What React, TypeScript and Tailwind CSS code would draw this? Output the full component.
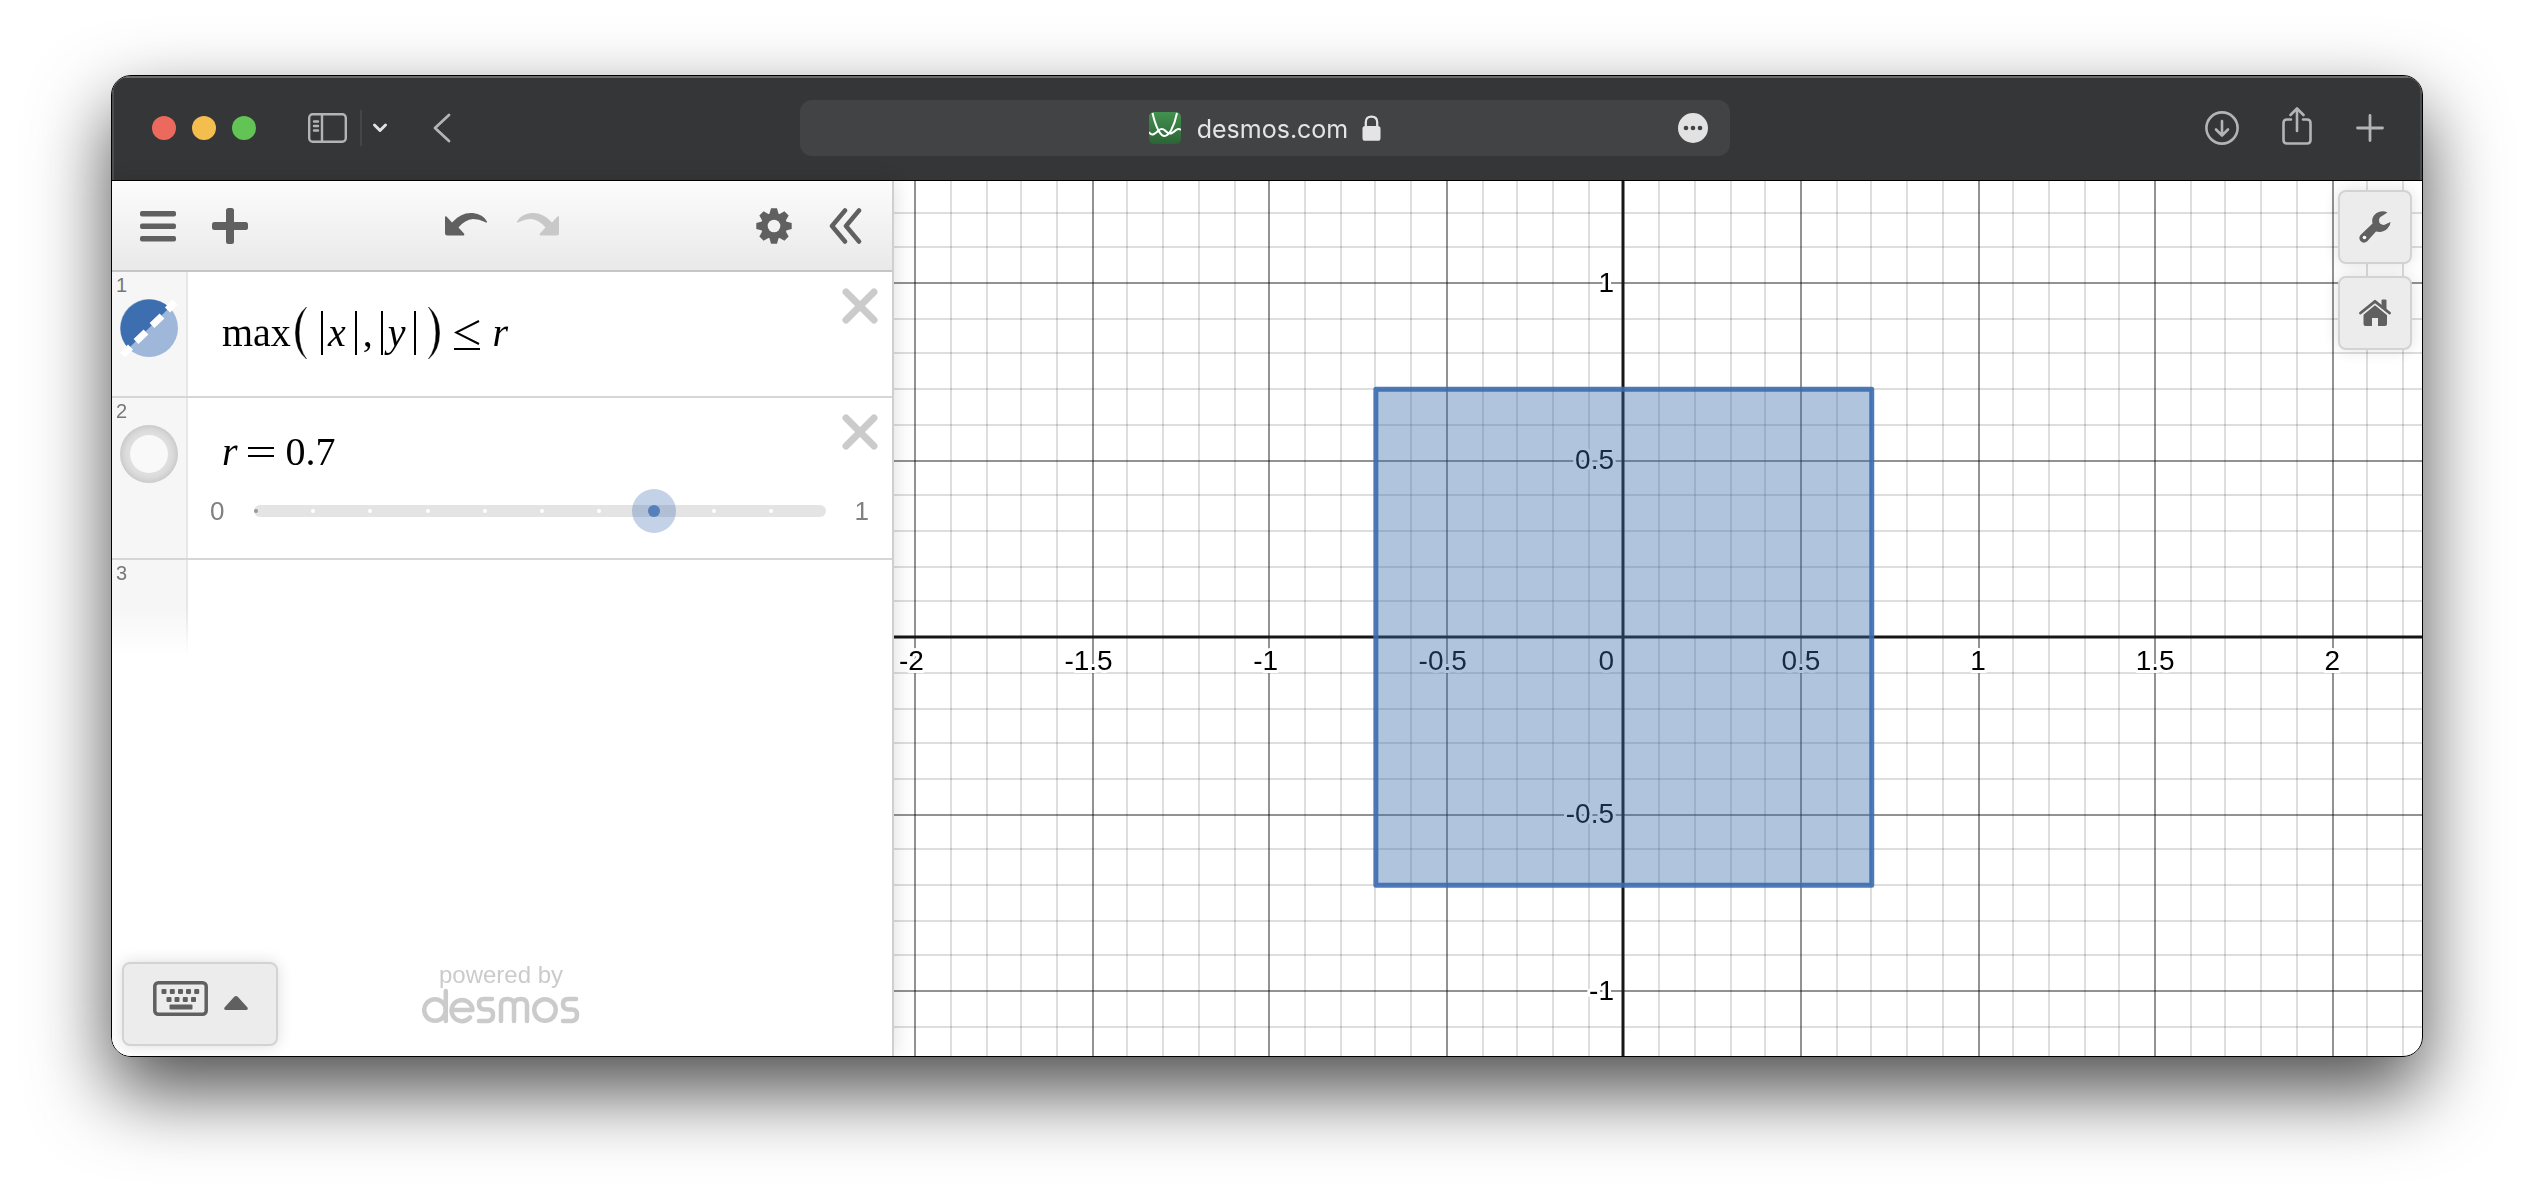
import React from 'react';

const GRID = 35.42;
const ORIGIN_X = 729.8;
const ORIGIN_Y = 456.2;
const snap = (v: number) => Math.floor(v / 2) * 2 + 1;
const gx = (k: number) => snap(ORIGIN_X + k * GRID);
const gy = (k: number) => snap(ORIGIN_Y + 1 - k * GRID) - 1;
const range = (a: number, b: number) => Array.from({ length: b - a + 1 }, (_, i) => a + i);

const X_LABELS = ['-2', '-1.5', '-1', '-0.5', '0.5', '1', '1.5', '2'];
const Y_LABELS = ['1', '0.5', '-0.5', '-1'];

function Graph() {
  const half = 7 * GRID;
  const edgeX = ORIGIN_X - half;
  const edgeY = ORIGIN_Y - half;
  return (
    <svg className="absolute inset-0 h-full w-full" role="img" aria-label="Graph of max(|x|,|y|) ≤ 0.7">
      {range(-20, 60).map((k) => (
        <line key={'x' + k} x1={gx(k)} x2={gx(k)} y1="0" y2="100%" stroke={k % 5 === 0 ? '#929292' : '#dedede'} strokeWidth="2" style={{ mixBlendMode: 'multiply' }} />
      ))}
      {range(-60, 12).map((k) => (
        <line key={'y' + k} y1={gy(k)} y2={gy(k)} x1="0" x2="100%" stroke={k % 5 === 0 ? '#929292' : '#dedede'} strokeWidth="2" style={{ mixBlendMode: 'multiply' }} />
      ))}
      <line x1="729" x2="729" y1="0" y2="100%" stroke="#161616" strokeWidth="3" />
      <line x1="0" x2="100%" y1="456" y2="456" stroke="#161616" strokeWidth="3" />
      <g fontFamily='"Liberation Sans", Arial, sans-serif' fontSize="28" fill="#000" stroke="#fff" strokeWidth="6" strokeLinejoin="round" paintOrder="stroke">
        {X_LABELS.map((t) => {
          const x = ORIGIN_X + Number(t) * 10 * GRID;
          return (
            <text key={t} x={t.startsWith('-') ? x - 4 : x} y="489" textAnchor="middle">{t}</text>
          );
        })}
        {Y_LABELS.map((t) => (
          <text key={t} x="720" y={ORIGIN_Y - Number(t) * 10 * GRID + 9} textAnchor="end">{t}</text>
        ))}
        <text x="720" y="489" textAnchor="end">0</text>
      </g>
      <rect x={edgeX} y={edgeY} width={half * 2} height={half * 2} fill="#396bac" fillOpacity="0.4" />
      <rect x={edgeX} y={edgeY} width={half * 2} height={half * 2} fill="none" stroke="#3b6db0" strokeOpacity="0.9" strokeWidth="5" strokeLinejoin="round" />
    </svg>
  );
}

function Undo({ flip, className }: { flip?: boolean; className: string }) {
  return (
    <svg className={className} width="42" height="24" viewBox="0 0 42 24" fill="currentColor" aria-hidden="true">
      <path transform={flip ? 'matrix(-1 0 0 1 42 0)' : undefined} d="M0 5.500Q0 3.500 1.500 4.500L7 10.500Q16 0 28 1Q38 2 42 9.500Q42 11.500 40 10Q34 7 28 7Q20 7.500 13.500 15.500L19 21.500Q20 23.500 18 23.500H2.500Q0 23.500 0 21Z" />
    </svg>
  );
}

function Gear() {
  return (
    <svg width="36" height="36" viewBox="0 0 36 36" aria-hidden="true">
      <g fill="currentColor">
        {[0, 45, 90, 135].map((a) => (
          <path key={a} transform={`rotate(${a} 18 18)`} d="M15 0.300H21L22.600 6V30L21 35.700H15L13.400 30V6Z" />
        ))}
        <circle cx="18" cy="18" r="13" />
      </g>
      <circle cx="18" cy="18" r="6.300" fill="#f2f2f2" />
    </svg>
  );
}

function Delete() {
  return (
    <button aria-label="Delete expression" className="absolute right-3.5 top-4 text-[#cbcbcb]">
      <svg width="36" height="36" viewBox="0 0 36 36" stroke="currentColor" strokeWidth="7" strokeLinecap="round" aria-hidden="true">
        <path d="M4 4L32 32M32 4L4 32" />
      </svg>
    </button>
  );
}

function Bars({ children }: { children: React.ReactNode }) {
  return <span className="inline-flex border-x-2 border-black pl-[5px] pr-[9px] leading-[44px]">{children}</span>;
}

function Paren({ flip }: { flip?: boolean }) {
  return (
    <svg width="12" height="52" viewBox="0 0 12 52" aria-hidden="true">
      <path transform={flip ? 'matrix(-1 0 0 1 12 0)' : undefined} d="M11.500 0Q0.500 9 0.500 26T11.500 52Q4 42 4 26T11.500 0Z" stroke="#000" strokeWidth="0.500" />
    </svg>
  );
}

function Gutter({ n, children, last }: { n: number; children?: React.ReactNode; last?: boolean }) {
  return (
    <div className={last ? 'flex h-24 w-[76px] shrink-0 flex-col border-r-2 border-[#e6e6e6] bg-[#f6f6f6] [mask-image:linear-gradient(#000_50%,transparent)]' : 'flex w-[76px] shrink-0 flex-col border-r-2 border-[#e6e6e6] bg-[#f6f6f6]'}>
      <span className="pl-1 pt-[3px] text-[20px] leading-[20px] text-[#777]">{n}</span>
      {children}
    </div>
  );
}

function Sidebar() {
  return (
    <aside className="relative z-10 flex w-[782px] shrink-0 flex-col border-r-2 border-[#cfcfcf] bg-white shadow-[0_0_20px_rgba(0,0,0,0.14)]">
      <div className="flex h-[91px] items-center border-b-2 border-[#c6c6c6] bg-linear-to-b from-[#fcfcfc] to-[#e9e9e9] pl-7 pr-[30px] text-[#606060]">
        <button aria-label="Menu">
          <svg width="36" height="36" viewBox="0 0 36 36" fill="currentColor" aria-hidden="true">
            <rect y="3" width="36" height="5.500" rx="2" /><rect y="15.500" width="36" height="5.500" rx="2" /><rect y="28" width="36" height="5.500" rx="2" />
          </svg>
        </button>
        <button aria-label="Add item" className="ml-9">
          <svg width="36" height="36" viewBox="0 0 36 36" fill="currentColor" aria-hidden="true">
            <rect y="14" width="36" height="8" rx="2.500" /><rect x="14" width="8" height="36" rx="2.500" />
          </svg>
        </button>
        <div className="ml-[197px] flex gap-[30px] pb-1">
          <button aria-label="Undo"><Undo className="text-[#606060]" /></button>
          <button aria-label="Redo"><Undo flip className="text-[#c8c8c8]" /></button>
        </div>
        <button aria-label="Graph settings" className="ml-auto"><Gear /></button>
        <button aria-label="Hide expression list" className="ml-9">
          <svg width="34" height="36" viewBox="0 0 34 36" fill="none" stroke="currentColor" strokeWidth="4.500" strokeLinecap="round" strokeLinejoin="round" aria-hidden="true">
            <path d="M17 2.500L4 18L17 33.500M31 2.500L18 18L31 33.500" />
          </svg>
        </button>
      </div>

      <div className="relative flex h-[126px] border-b-2 border-[#d6d6d6]">
        <Gutter n={1}>
          <button aria-label="Hide this expression" className="ml-2 mt-1">
            <svg width="58" height="58" viewBox="0 0 58 58" aria-hidden="true">
              <circle cx="29" cy="29" r="29" fill="#9fb7d8" />
              <path d="M8.500 49.500A29 29 0 0 1 49.500 8.500Z" fill="#3d6eaf" />
              <path d="M10.500 48L2.500 56M26 33L16 42.500M42 17L32 26.500M55 3L47.500 11" stroke="#fff" strokeWidth="7" />
            </svg>
          </button>
        </Gutter>
        <div className="flex flex-1 items-center pb-0.5 pl-[34px] font-['Liberation_Serif',serif] text-[40px] leading-[52px] text-black">
          <span>max</span>
          <span className="ml-1 flex items-center">
            <Paren />
            <span className="ml-3.5 mr-3 flex items-center">
              <Bars><i>x</i></Bars>
              <span className="ml-1.5 mr-2 leading-[44px]">,</span>
              <Bars><i>y</i></Bars>
            </span>
            <Paren flip />
          </span>
          <span className="ml-3.5 mr-3 mt-1">
            <svg width="26" height="32" viewBox="0 0 26 32" fill="none" stroke="#000" strokeWidth="2" aria-hidden="true"><path d="M25 2L2 13.500L25 25M0 30H26" /></svg>
          </span>
          <i>r</i>
        </div>
        <Delete />
      </div>

      <div className="relative flex h-[162px] border-b-2 border-[#d6d6d6]">
        <Gutter n={2}>
          <button aria-label="Show this expression" className="ml-2 mt-1 flex h-[58px] w-[58px] items-center justify-center rounded-full bg-[#dfdfdf] shadow-[inset_0_0_8px_rgba(0,0,0,0.18)]">
            <span className="h-[38px] w-[38px] rounded-full bg-[#f9f9f9]" />
          </button>
        </Gutter>
        <div className="flex flex-1 flex-col pl-[34px] pt-7 font-['Liberation_Serif',serif] text-[40px] leading-[52px] text-black">
          <div className="flex items-center">
            <i>r</i>
            <span className="ml-2.5 mr-3"><svg width="26" height="12" viewBox="0 0 26 12" fill="#000" aria-hidden="true"><rect y="1" width="26" height="2" /><rect y="9" width="26" height="2" /></svg></span>
            <span>0.7</span>
          </div>
        </div>
        <div className="absolute bottom-[25px] left-[98px] right-[22px] flex items-center font-['Liberation_Sans',Arial,sans-serif] text-[26px] leading-[44px] text-[#808080]">
          <label htmlFor="r" className="w-11">0</label>
          <div className="relative h-3 flex-1 rounded-full bg-[#e4e4e4]">
            {range(0, 9).map((i) => (
              <span key={i} className={i === 0 ? 'absolute top-1 h-1 w-1 rounded-full bg-[#999]' : 'absolute top-1 h-1 w-1 rounded-full bg-white'} style={{ left: i * 10 + '%' }} />
            ))}
            <input id="r" type="range" min="0" max="1" step="0.1" defaultValue="0.7" aria-label="r" className="absolute inset-0 w-full cursor-pointer opacity-0" />
            <span className="pointer-events-none absolute -top-4 left-[70%] -ml-[22px] flex h-11 w-11 items-center justify-center rounded-full bg-[#396bac]/30">
              <span className="h-3 w-3 rounded-full bg-[#5580bc]" />
            </span>
          </div>
          <span className="w-11 pr-px text-right">1</span>
        </div>
        <Delete />
      </div>

      <Gutter n={3} last />

      <div className="mt-auto flex items-end pb-2.5 pl-2.5">
        <button aria-label="Open keypad" className="flex h-[84px] w-[156px] items-center justify-center gap-4 rounded-lg border-2 border-[#d3d3d3] bg-[#ececec] pb-3 text-[#606060] shadow-[0_0_16px_rgba(0,0,0,0.14)]">
          <svg width="55" height="35" viewBox="0 0 55 35" fill="currentColor" aria-hidden="true">
            <rect x="1.800" y="1.800" width="51.400" height="31.400" rx="3.500" fill="none" stroke="currentColor" strokeWidth="3.500" />
            {[8.5, 16.8, 25, 33, 41.2].map((x) => <rect key={x} x={x} y="8" width="5" height="5" rx="1" />)}
            {[13.5, 21.5, 29.8, 38].map((x) => <rect key={x} x={x} y="16" width="5" height="5" rx="1" />)}
            <rect x="16.500" y="23.500" width="23" height="5" rx="1" />
          </svg>
          <svg className="mt-2.5" width="24" height="14" viewBox="0 0 24 14" fill="currentColor" aria-hidden="true"><path d="M12 0Q13 0 14 1L23.500 11.500Q24.500 14 22 14H2Q-0.500 14 0.500 11.500L10 1Q11 0 12 0Z" /></svg>
        </button>
        <div className="ml-36 flex flex-col items-center pb-[22px] text-[#cbcbcb]">
          <span className="text-[24px] leading-[26px]">powered by</span>
          <svg width="158" height="36" viewBox="0 0 158 36" fill="none" stroke="currentColor" strokeWidth="4.500" strokeLinecap="round" strokeLinejoin="round" role="img" aria-label="desmos">
            <circle cx="13" cy="22" r="10.800" /><path d="M23.800 3V33" />
            <path d="M30 22H50.500A10.500 10.500 0 1 0 48 29.500" />
            <path d="M70 11H62Q57 11 57 16T62 21.500H66Q71 21.500 71 27T66 33H57" />
            <path d="M79 33V17Q79 11 85 11Q92 11 92 17V33M92 17Q92 11 99 11Q105 11 105 17V33" />
            <circle cx="123" cy="22" r="10.800" />
            <path d="M154 11H146Q141 11 141 16T146 21.500H150Q155 21.500 155 27T150 33H141" />
          </svg>
        </div>
      </div>
    </aside>
  );
}

function TitleBar() {
  return (
    <header className="grid h-[105px] grid-cols-[1fr_930px_1fr] items-center border-b border-black bg-[#353638] pr-1 text-[#b4b4b6] shadow-[inset_0_2px_0_#6c6d6e,inset_2px_0_0_#4c4d4e,inset_-2px_0_0_#4c4d4e]">
      <div className="flex items-center pl-10">
        <div className="flex gap-4">
          <button aria-label="Close" className="h-6 w-6 rounded-full bg-[#ec695e]" />
          <button aria-label="Minimize" className="h-6 w-6 rounded-full bg-[#f4be4f]" />
          <button aria-label="Zoom" className="h-6 w-6 rounded-full bg-[#61c454]" />
        </div>
        <button aria-label="Sidebar" className="ml-[52px]">
          <svg width="39" height="30" viewBox="0 0 39 30" fill="none" stroke="currentColor" strokeWidth="2.400" strokeLinecap="round" aria-hidden="true">
            <rect x="1.200" y="1.200" width="36.600" height="27.600" rx="3.500" /><path d="M14 1V29M6 8.500H10M6 13H10M6 17.500H10" />
          </svg>
        </button>
        <span className="ml-[13px] h-9 w-0.5 bg-[#454648]" />
        <button aria-label="Tab groups" className="ml-2.5 text-[#e2e2e3]">
          <svg width="16" height="12" viewBox="0 0 16 12" fill="none" stroke="currentColor" strokeWidth="3" strokeLinecap="round" strokeLinejoin="round" aria-hidden="true"><path d="M2.500 3L8 8.500L13.500 3" /></svg>
        </button>
        <button aria-label="Back" className="ml-[45px]">
          <svg width="18" height="30" viewBox="0 0 18 30" fill="none" stroke="currentColor" strokeWidth="2.800" strokeLinecap="round" strokeLinejoin="round" aria-hidden="true"><path d="M16 2L2 15L16 28" /></svg>
        </button>
      </div>
      <div className="relative flex h-14 items-center justify-center rounded-xl bg-[#424345] text-[#e4e4e5]">
        <svg width="32" height="32" viewBox="0 0 32 32" aria-hidden="true">
          <defs><linearGradient id="fav" x2="0" y2="1"><stop stopColor="#43914f" /><stop offset="1" stopColor="#2c6436" /></linearGradient></defs>
          <rect width="32" height="32" rx="5" fill="url(#fav)" />
          <path d="M3.500 1Q6 12 9.500 18.500Q12.500 24 15.500 24Q18.500 24 22 18.500Q26 11 28 1M0 20Q2 23.500 5 22Q7 21 9.500 18.500Q13 15.500 16 18.500Q19 22 22 21.500Q25 20 27 18Q30 16 32 18" fill="none" stroke="#fff" strokeWidth="2" />
        </svg>
        <span className="ml-4 pt-0.5 font-[Inter,sans-serif] text-[25px] leading-[32px]">desmos.com</span>
        <svg className="ml-3.5" width="19" height="28" viewBox="0 0 20 28" aria-hidden="true"><rect x="0.500" y="12" width="19" height="15.500" rx="3" fill="currentColor" /><path d="M4 13V8Q4 2 10 2T16 8V13" fill="none" stroke="currentColor" strokeWidth="2.400" /></svg>
        <button aria-label="Page menu" className="absolute right-[22px]">
          <svg width="30" height="30" viewBox="0 0 30 30" aria-hidden="true"><circle cx="15" cy="15" r="15" fill="#e2e2e3" /><g fill="#424345"><circle cx="8" cy="15" r="2.300" /><circle cx="15" cy="15" r="2.300" /><circle cx="22" cy="15" r="2.300" /></g></svg>
        </button>
      </div>
      <div className="flex items-center justify-end pr-[34px]">
        <button aria-label="Downloads">
          <svg width="34" height="34" viewBox="0 0 34 34" fill="none" stroke="currentColor" strokeWidth="2.600" strokeLinecap="round" strokeLinejoin="round" aria-hidden="true"><circle cx="17" cy="17" r="15.600" /><path d="M17 10V24M11 18.500L17 24.500L23 18.500" /></svg>
        </button>
        <button aria-label="Share" className="ml-[43px]">
          <svg className="-mt-1" width="30" height="38" viewBox="0 0 30 38" fill="none" stroke="currentColor" strokeWidth="2.600" strokeLinecap="round" strokeLinejoin="round" aria-hidden="true"><path d="M9 12.500H5Q1.500 12.500 1.500 16V33Q1.500 36.500 5 36.500H25Q28.500 36.500 28.500 33V16Q28.500 12.500 25 12.500H21M15 24V2M8.500 8L15 1.500L21.500 8" /></svg>
        </button>
        <button aria-label="New tab" className="ml-11">
          <svg width="28" height="28" viewBox="0 0 28 28" stroke="currentColor" strokeWidth="2.800" strokeLinecap="round" aria-hidden="true"><path d="M14 1.500V26.500M1.500 14H26.500" /></svg>
        </button>
      </div>
    </header>
  );
}

const sideButton = 'flex h-[74px] w-[74px] items-center justify-center rounded-lg border-2 border-[#d3d3d3] bg-[#ececec] text-[#606060] shadow-[0_0_16px_rgba(0,0,0,0.12)]';

export default function App() {
  return (
    <div className="flex min-h-screen flex-col bg-white px-[111px] pb-[147px] pt-[75px] font-['Liberation_Sans',Arial,sans-serif]">
      <div className="flex flex-1 flex-col rounded-[20px] shadow-[0_34px_78px_rgba(0,0,0,0.7)]">
        <div className="flex flex-1 flex-col overflow-hidden rounded-[20px] border border-black bg-white">
          <TitleBar />
          <main className="flex flex-1">
            <Sidebar />
            <section className="relative flex-1 overflow-hidden">
              <Graph />
              <div className="absolute right-2.5 top-[9px] flex flex-col gap-3">
                <button aria-label="Graph settings" className={sideButton}>
                  <svg width="32" height="32" viewBox="0 0 32 32" aria-hidden="true">
                    <path fill="currentColor" d="M28.500 1.500Q23 -1 17.500 2Q12 6 13.500 12.500L1.500 24Q-0.800 27 1.500 30Q4.500 33 8 30.500L17 20.500Q24 22 28.500 17.500Q31.500 14.500 31.500 11L25 14Q20 13.500 20 9.500Q20 6 23 5Z" />
                    <circle cx="5.500" cy="26.500" r="1.800" fill="#fff" />
                  </svg>
                </button>
                <button aria-label="Default viewport" className={sideButton}>
                  <svg width="32" height="28" viewBox="0 0 32 28" aria-hidden="true">
                    <path d="M22.500 7V1.500Q22.500 0.500 23.500 0.500H26.500Q27.500 0.500 27.500 1.500V12Z" fill="currentColor" />
                    <path d="M16 3.500L28 13.500V25Q28 27 26 27H19V19H13V27H6.500Q4.500 27 4.500 25V13.500Z" fill="currentColor" />
                    <path d="M2 16.500L16 5L30 16.500" fill="none" stroke="#ececec" strokeWidth="2" />
                    <path d="M1.500 14L16 2.300L30.500 14" fill="none" stroke="currentColor" strokeWidth="2.800" strokeLinecap="round" strokeLinejoin="round" />
                  </svg>
                </button>
              </div>
            </section>
          </main>
        </div>
      </div>
    </div>
  );
}
